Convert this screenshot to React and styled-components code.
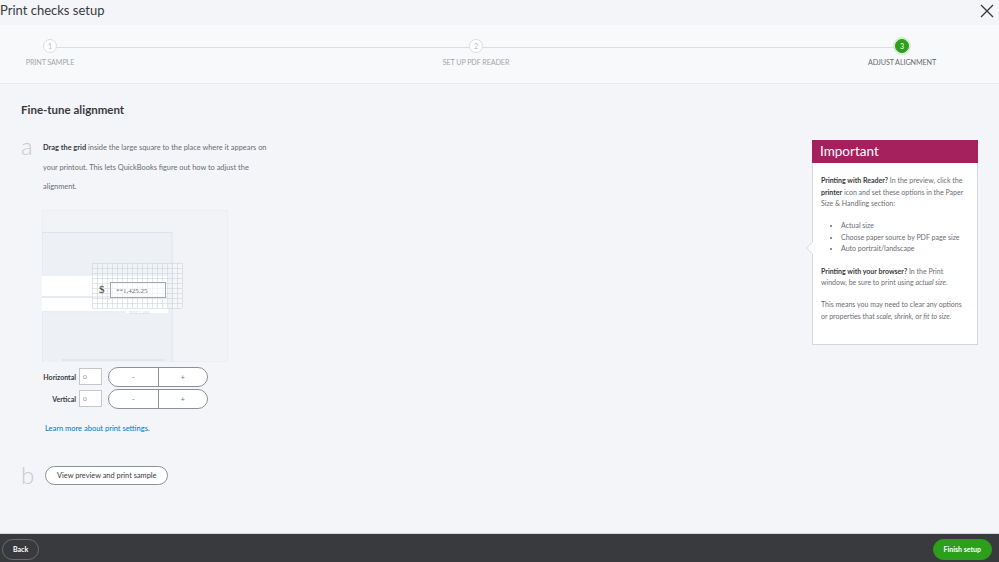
import React from "react";
import styled, { createGlobalStyle } from "styled-components";

const Global = createGlobalStyle`
  html, body { margin: 0; padding: 0; }
  body {
    width: 999px; height: 562px; overflow: hidden;
    background: #f4f5f8;
    font-family: Lato, "Noto Sans", sans-serif;
    color: #393a3d;
  }
`;

const Page = styled.div`
  width: 999px; height: 562px;
  display: flex; flex-direction: column;
`;

const Header = styled.header`
  height: 25px; flex: none;
  display: flex; align-items: center; justify-content: space-between;
  padding: 0 4px 0 0;
`;

const Title = styled.h1`
  margin: 0; margin-top: -6px;
  font-size: 13px; font-weight: 400; letter-spacing: 0;
  color: #393a3d;
`;

const CloseBtn = styled.button`
  border: 0; background: none; padding: 0; width: 16px; height: 16px;
  display: flex; margin-top: -4px; margin-right: 0;
`;

const Stepper = styled.nav`
  height: 58px; flex: none;
  background: #f8f9fa;
  border-bottom: 1px solid #e8e9ec;
  display: flex; justify-content: space-between;
  padding: 0 47px 0 0;
  position: relative;
  &::before {
    content: ""; position: absolute; left: 50px; right: 97px; top: 22px;
    height: 1px; background: #dcdee2;
  }
`;

const Step = styled.div`
  width: 100px; position: relative;
  display: flex; flex-direction: column; align-items: center;
  padding-top: 15px;
`;

const Circle = styled.div`
  width: 14px; height: 14px; border-radius: 50%;
  box-sizing: border-box;
  display: flex; align-items: center; justify-content: center;
  font-size: 7px;
  background: ${p => (p.$active ? "#2ca01c" : "#fff")};
  color: ${p => (p.$active ? "#fff" : "#b9bcc2")};
  border: 1px solid ${p => (p.$active ? "#2ca01c" : "#dcdee2")};
  box-shadow: ${p => (p.$active ? "0 0 0 2px #d6ecd2" : "none")};
  margin-top: -1px;
`;

const StepLabel = styled.div`
  margin-top: 5px; font-size: 7.2px; letter-spacing: -0.1px;
  color: ${p => (p.$active ? "#6b6c72" : "#a3a6ac")};
  white-space: nowrap;
`;

const Main = styled.main`
  flex: 1; padding: 18px 21px 0 21px;
  display: flex; flex-direction: column;
`;

const SectionTitle = styled.h2`
  margin: 0; font-size: 11.5px; font-weight: 700; line-height: 16px;
  color: #393a3d;
`;

const Body = styled.div`
  display: flex; justify-content: space-between; align-items: flex-start;
  margin-top: 20px;
`;

const Left = styled.div`
  display: flex; flex-direction: column;
`;

const StepRow = styled.div`
  display: flex; align-items: ${p => p.$center ? "center" : "flex-start"};
  margin-top: ${p => p.$mt || 0}px;
`;

const Letter = styled.div`
  width: 22px; flex: none;
  font-size: 24px; font-weight: 300; line-height: 16px;
  color: #c8cacf;
`;

const StepBody = styled.div`
  display: flex; flex-direction: column;
`;

const Para = styled.p`
  margin: 0; width: 232px;
  font-size: 7.4px; line-height: 19.5px; color: #6b6c72;
  b { color: #393a3d; font-weight: 700; }
`;

const Preview = styled.div`
  margin-top: 13px; width: 186px; height: 152px;
  margin-left: -1px;
`;

const Controls = styled.div`
  display: grid; grid-template-columns: 33px 23px 103px;
  column-gap: 3px; row-gap: 2px; align-items: center;
  margin-top: 5px;
  & > :nth-child(3n) { margin-left: 3px; }
`;

const CtrlLabel = styled.label`
  font-size: 7px; font-weight: 700; color: #393a3d; text-align: right;
`;

const NumInput = styled.input`
  width: 23px; height: 17px; box-sizing: border-box;
  border: 1px solid #c4c7cc; background: #fff;
  font: 6.5px Lato, sans-serif; color: #8d9096; padding: 0 3px;
`;

const BtnGroup = styled.div`
  display: flex; height: 20px; box-sizing: border-box;
  border: 1px solid #8d9096; border-radius: 10px; overflow: hidden;
  background: #fff;
`;

const GroupBtn = styled.button`
  flex: 1; border: 0; background: none; padding: 0;
  font: 7px Lato, sans-serif; color: #6b6c72;
  & + & { border-left: 1px solid #8d9096; }
`;

const Link = styled.a`
  margin-top: 15px; margin-left: 2px;
  font-size: 7.5px; color: #0077c5; text-decoration: none;
`;

const PillBtn = styled.button`
  height: 19px; padding: 0 11px; box-sizing: border-box;
  border: 1px solid #8d9096; border-radius: 10px; background: #fff;
  font: 7.4px Lato, sans-serif; color: #393a3d;
  margin-left: 2px;
`;

const Aside = styled.aside`
  width: 166px; height: 205px; box-sizing: border-box;
  margin-top: 2px;
  background: #fff; border: 1px solid #d4d7dc;
  position: relative;
  &::before {
    content: ""; position: absolute; left: -7px; top: 100px;
    border: 7px solid transparent; border-left: 0;
    border-right-color: #d4d7dc;
  }
  &::after {
    content: ""; position: absolute; left: -6px; top: 100px;
    border: 7px solid transparent; border-left: 0;
    border-right-color: #fff;
  }
`;

const AsideHead = styled.div`
  height: 23px; margin: -1px -1px 0; background: #a4215e;
  color: #fff; font-size: 13.5px; line-height: 23px; padding-left: 8px;
`;

const AsideBody = styled.div`
  padding: 12px 8px 0 8px;
  font-size: 7px; line-height: 11.6px; color: #6b6c72;
  p { margin: 0 0 10.5px 0; }
  b { color: #393a3d; font-weight: 700; }
  ul { margin: 0 0 10.5px 0; padding-left: 20px; }
`;

const Footer = styled.footer`
  height: 28px; flex: none; background: #393a3d;
  border-top: 1px solid #d4d7dc;
  display: flex; align-items: center; justify-content: space-between;
  padding: 0 7px 0 2px;
`;

const FootBtn = styled.button`
  height: 21px; box-sizing: border-box; border-radius: 11px;
  font: 700 7px Lato, sans-serif; color: #fff; padding: 0 10px;
  background: ${p => (p.$primary ? "#2ca01c" : "transparent")};
  border: 1px solid ${p => (p.$primary ? "#2ca01c" : "#6b6c72")};
  margin-top: 2px;
`;

function CheckPreview() {
  const vLines = [];
  for (let x = 50; x <= 140; x += 5) vLines.push(x);
  const hLines = [];
  for (let y = 53; y <= 98; y += 5) hLines.push(y);
  return (
    <svg width="186" height="152" viewBox="0 0 186 152">
      <rect x="0.5" y="0.5" width="185" height="151" fill="#f1f3f6" stroke="#eceef2" />
      <rect x="0" y="22.5" width="130" height="130" fill="#edf1f5" stroke="#dfe4ea" />
      <rect x="0" y="66" width="126" height="20" fill="#fff" />
      <line x1="0" y1="87" x2="126" y2="87" stroke="#e1e5ea" />
      <rect x="0" y="88" width="126" height="15" fill="#fff" />
      <line x1="0" y1="102" x2="84" y2="102" stroke="#d9dde3" />
      <text x="87" y="104" fontSize="4.5" fill="#d0d4da" fontFamily="Liberation Serif, serif">DOLLARS</text>
      <line x1="20" y1="150" x2="123" y2="150" stroke="#d9dde3" />
      <rect x="50" y="53" width="90" height="45" fill="rgba(255,255,255,0.25)" />
      {vLines.map(x => (
        <line key={"v" + x} x1={x + 0.5} y1="53" x2={x + 0.5} y2="98" stroke="#cfd4da" strokeWidth="0.6" />
      ))}
      {hLines.map(y => (
        <line key={"h" + y} x1="50" y1={y + 0.5} x2="140" y2={y + 0.5} stroke="#cfd4da" strokeWidth="0.6" />
      ))}
      <text x="57" y="83" fontSize="11" fill="#393a3d" fontFamily="Liberation Serif, serif">$</text>
      <rect x="68.5" y="72.5" width="55" height="15" fill="rgba(255,255,255,0.6)" stroke="#a3a6ac" />
      <text x="74" y="83" fontSize="7" fill="#6b6c72" fontFamily="Liberation Serif, serif">**1,425.25</text>
    </svg>
  );
}

export default function App() {
  const steps = [
    { n: 1, label: "PRINT SAMPLE" },
    { n: 2, label: "SET UP PDF READER" },
    { n: 3, label: "ADJUST ALIGNMENT", active: true },
  ];
  return (
    <Page>
      <Global />
      <Header>
        <Title>Print checks setup</Title>
        <CloseBtn aria-label="Close">
          <svg width="16" height="16" viewBox="0 0 16 16">
            <path d="M2 2 L14 14 M14 2 L2 14" stroke="#393a3d" strokeWidth="1.4" fill="none" />
          </svg>
        </CloseBtn>
      </Header>
      <Stepper>
        {steps.map(s => (
          <Step key={s.n}>
            <Circle $active={s.active}>{s.n}</Circle>
            <StepLabel $active={s.active}>{s.label}</StepLabel>
          </Step>
        ))}
      </Stepper>
      <Main>
        <SectionTitle>Fine-tune alignment</SectionTitle>
        <Body>
          <Left>
            <StepRow>
              <Letter>a</Letter>
              <StepBody>
                <Para>
                  <b>Drag the grid</b> inside the large square to the place where it appears on your printout. This lets QuickBooks figure out how to adjust the alignment.
                </Para>
                <Preview>
                  <CheckPreview />
                </Preview>
                <Controls>
                  <CtrlLabel>Horizontal</CtrlLabel>
                  <NumInput defaultValue="0" />
                  <BtnGroup>
                    <GroupBtn>-</GroupBtn>
                    <GroupBtn>+</GroupBtn>
                  </BtnGroup>
                  <CtrlLabel>Vertical</CtrlLabel>
                  <NumInput defaultValue="0" />
                  <BtnGroup>
                    <GroupBtn>-</GroupBtn>
                    <GroupBtn>+</GroupBtn>
                  </BtnGroup>
                </Controls>
                <Link href="#">Learn more about print settings.</Link>
              </StepBody>
            </StepRow>
            <StepRow $center $mt={33}>
              <Letter>b</Letter>
              <PillBtn>View preview and print sample</PillBtn>
            </StepRow>
          </Left>
          <Aside>
            <AsideHead>Important</AsideHead>
            <AsideBody>
              <p>
                <b>Printing with Reader?</b> In the preview, click the <b>printer</b> icon and set these options in the Paper Size &amp; Handling section:
              </p>
              <ul>
                <li>Actual size</li>
                <li>Choose paper source by PDF page size</li>
                <li>Auto portrait/landscape</li>
              </ul>
              <p>
                <b>Printing with your browser?</b> In the Print window, be sure to print using <i>actual size</i>.
              </p>
              <p>
                This means you may need to clear any options or properties that <i>scale, shrink,</i> or <i>fit to size</i>.
              </p>
            </AsideBody>
          </Aside>
        </Body>
      </Main>
      <Footer>
        <FootBtn>Back</FootBtn>
        <FootBtn $primary>Finish setup</FootBtn>
      </Footer>
    </Page>
  );
}
